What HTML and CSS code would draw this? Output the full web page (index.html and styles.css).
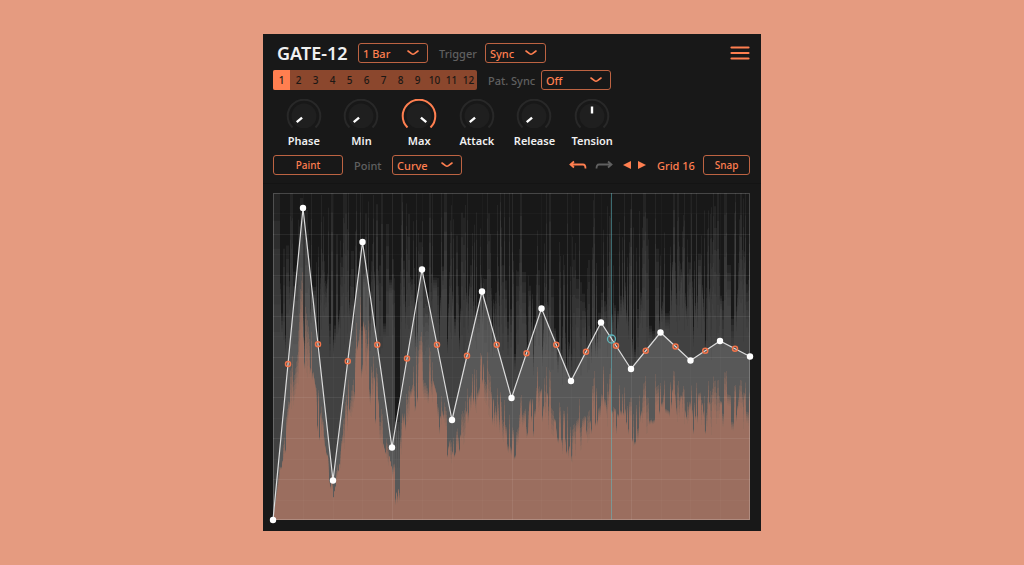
FILE: index.html
```html
<!DOCTYPE html>
<html lang="en">
<head>
    <meta charset="UTF-8">
    <meta name="viewport" content="width=device-width, initial-scale=1.0">
    <title>GATE-12</title>
    <link rel="stylesheet" href="styles.css">
</head>
<body>
    <main class="plugin">
        <div class="row">
            <h1>GATE-12</h1>
            <div class="select">
                <select class="wide" aria-label="Rate"><option>1 Bar</option><option>1/2</option><option>1/4</option></select>
                <svg viewBox="0 0 12 6"><path d="M1 1 4.5 3.7Q6 4.7 7.5 3.7L11 1"/></svg>
            </div>
            <label class="dim trigger" for="trigger">Trigger</label>
            <div class="select">
                <select id="trigger"><option>Sync</option><option>MIDI</option><option>Audio</option></select>
                <svg viewBox="0 0 12 6"><path d="M1 1 4.5 3.7Q6 4.7 7.5 3.7L11 1"/></svg>
            </div>
            <button class="menu-btn" aria-label="Menu">
                <svg viewBox="0 0 20 16"><path d="M1.5 2.5H18.5M1.5 8H18.5M1.5 13.5H18.5"/></svg>
            </button>
        </div>

        <div class="row">
            <div class="patterns" id="patterns"></div>
            <label class="dim pat-sync" for="patSync">Pat. Sync</label>
            <div class="select">
                <select id="patSync" class="wide"><option>Off</option><option>1 Beat</option><option>1 Bar</option></select>
                <svg viewBox="0 0 12 6"><path d="M1 1 4.5 3.7Q6 4.7 7.5 3.7L11 1"/></svg>
            </div>
        </div>

        <div class="knobs" id="knobs"></div>

        <div class="row tools">
            <button class="btn paint">Paint</button>
            <label class="dim point" for="point">Point</label>
            <div class="select">
                <select id="point" class="wide"><option>Curve</option><option>Hold</option><option>Pulse</option></select>
                <svg viewBox="0 0 12 6"><path d="M1 1 4.5 3.7Q6 4.7 7.5 3.7L11 1"/></svg>
            </div>
            <button class="icon-btn undo" aria-label="Undo">
                <svg viewBox="0 0 18 10"><path d="M5 1.5 1.5 4.5 5 7.5M1.5 4.5H14Q16.5 4.5 16.5 8.5"/></svg>
            </button>
            <button class="icon-btn redo" aria-label="Redo">
                <svg viewBox="0 0 18 10"><path d="M13 1.5 16.5 4.5 13 7.5M16.5 4.5H4Q1.5 4.5 1.5 8.5"/></svg>
            </button>
            <div class="arrows">
                <button class="icon-btn" aria-label="Rotate left"><svg viewBox="0 0 8 8"><path d="M8 0V8L0 4Z"/></svg></button>
                <button class="icon-btn" aria-label="Rotate right"><svg viewBox="0 0 8 8"><path d="M0 0V8L8 4Z"/></svg></button>
            </div>
            <span class="grid-label">Grid 16</span>
            <button class="btn snap">Snap</button>
        </div>

        <div class="view">
            <svg id="graph" viewBox="0 0 477 327" role="img" aria-label="Gate envelope"></svg>
        </div>
    </main>
    <script src="script.js"></script>
</body>
</html>
```

FILE: styles.css
```css
*{
    box-sizing: border-box;
}
body{
    margin: 0;
    min-height: 100vh;
    display: flex;
    justify-content: center;
    align-items: center;
    background-color: #e59b80;
    font-family: "Noto Sans", "Open Sans", sans-serif;
    font-size: 11px;
    font-weight: 500;
    color: #f0f0f0;
}
button, select{
    font: inherit;
    color: #ff7f50;
    background: none;
    border: none;
    padding: 0;
    margin: 0;
}
svg{
    display: block;
    fill: none;
    stroke: currentColor;
}
.plugin{
    width: 100%;
    max-width: 498px;
    padding: 9px 11px 11px 10px;
    background-color: #181818;
}
.row{
    display: flex;
    align-items: center;
    height: 20px;
    margin-bottom: 7px;
}
h1{
    margin: 0 12px 0 4px;
    font-size: 18px;
    font-weight: 600;
    line-height: 20px;
    width: 69px;
    white-space: nowrap;
}
.dim{
    color: #606060;
    white-space: nowrap;
}
.trigger{
    width: 46px;
    margin-left: 11px;
}
.pat-sync{
    width: 53px;
    margin-left: 11px;
}
.point{
    width: 38px;
    margin-left: 11px;
}

/* drop-downs */
.select{
    display: grid;
    align-items: center;
    color: #ff7f50;
}
.select select, .select svg{
    grid-area: 1 / 1;
}
.select select{
    appearance: none;
    width: 61px;
    height: 20px;
    padding: 0 4px;
    border: 1px solid #bd6342;
    border-radius: 3px;
}
.select .wide{
    width: 70px;
}
.select svg{
    justify-self: end;
    width: 12px;
    height: 6px;
    margin-right: 9px;
    stroke-width: 1.6;
    stroke-linecap: round;
    pointer-events: none;
}
.menu-btn{
    margin-left: auto;
}
.menu-btn svg{
    width: 20px;
    height: 16px;
    stroke-width: 2.2;
    stroke-linecap: round;
}

/* pattern selector */
.patterns{
    display: flex;
    border-radius: 2px;
    overflow: hidden;
    background-color: #8b472d;
}
.patterns button{
    width: 17px;
    height: 20px;
    color: #1c1815;
    font-size: 10px;
    text-align: center;
}
.patterns .active{
    background-color: #ff7f50;
}

/* knobs */
.knobs{
    display: grid;
    grid-template-columns: repeat(6, 1fr);
    max-width: 346px;
    margin: 9px 0 6px 2px;
}
.knob{
    display: grid;
    justify-items: center;
    row-gap: 5px;
    line-height: 16px;
    font-weight: 600;
    color: #f0f0f0;
}
.knob svg, .knob input{
    grid-area: 1 / 1;
    width: 36px;
    height: 29px;
    margin: 0;
}
.knob input{
    opacity: 0;
}
.knob .disc{
    fill: #1f1f1f;
    stroke: none;
}
.knob .track{
    stroke: #282828;
    stroke-width: 2;
}
.knob .full{
    stroke: #ff7f50;
}
.knob .hand{
    stroke: #ffffff;
    stroke-width: 2.4;
}

/* toolbar */
.tools{
    margin-bottom: 0;
}
.btn{
    height: 20px;
    border: 1px solid #bd6342;
    border-radius: 3px;
    font-size: 10px;
}
.paint{
    width: 70px;
}
.snap{
    width: 47px;
}
.icon-btn svg{
    height: 10px;
    stroke-width: 1.8;
}
.undo{
    margin-left: auto;
}
.undo svg, .redo svg{
    width: 18px;
}
.redo{
    margin-left: 8px;
    color: #606060;
}
.arrows{
    display: flex;
    gap: 7px;
    margin: 0 11px 0 10px;
}
.arrows svg{
    width: 8px;
    height: 8px;
    fill: currentColor;
    stroke: none;
}
.grid-label{
    width: 37px;
    margin-right: 9px;
    color: #ff7f50;
    white-space: nowrap;
}

/* envelope view */
.view{
    margin: 8px -11px 0 -10px;
    padding: 9px 11px 0 10px;
    border-top: 1px solid #141414;
}
#graph{
    width: 100%;
    overflow: visible;
}
.wave, .wet, .area{
    stroke: none;
}
.wave{
    fill: #424242;
}
.wet{
    fill: #9c6f60;
}
.area{
    fill: rgba(255, 255, 255, 0.12);
}
.grid{
    stroke: rgba(255, 255, 255, 0.025);
}
.grid.major{
    stroke: rgba(255, 255, 255, 0.07);
}
.frame{
    stroke: rgba(255, 255, 255, 0.2);
}
.curve{
    stroke: #dcdcdc;
    stroke-width: 1.2;
}
.node{
    fill: #ffffff;
    stroke: none;
}
.mid{
    stroke: #f0734a;
    stroke-width: 1.5;
}
.playhead{
    stroke: rgba(95, 190, 200, 0.5);
    stroke-width: 1;
}
.playhead-dot{
    stroke: #5fb5bb;
    stroke-width: 1.3;
}
```

FILE: script.js
```javascript
const graph = document.getElementById('graph');
const patterns = document.getElementById('patterns');
const knobs = document.getElementById('knobs');

const W = 477;
const H = 327;

for(let i = 1; i <= 12; i++){
    const btn = document.createElement('button');
    btn.textContent = i;
    if(i === 1){
        btn.classList.add('active');
    }
    patterns.appendChild(btn);
}

const params = [
    ['Phase', 0], ['Min', 0], ['Max', 100],
    ['Attack', 0], ['Release', 0], ['Tension', 50]
];
params.forEach(function([name, value]){
    // the hand sweeps 260 degrees, straight up at 50
    const angle = (value - 50) * 2.6;
    const knob = document.createElement('label');
    knob.className = 'knob';
    knob.innerHTML = `
        <svg viewBox="0 0 36 29">
            <circle class="disc" cx="18" cy="17" r="12.5"/>
            <path class="track ${value === 100 ? 'full' : ''}" d="M6.5 28.5A16.3 16.3 0 1 1 29.5 28.5"/>
            <path class="hand" d="M18 7.5V14.5" transform="rotate(${angle} 18 17)"/>
        </svg>
        <input type="range" min="0" max="100" value="${value}">
        <span>${name}</span>`;
    knobs.appendChild(knob);
});

const points = [
    [0, 327], [30, 15], [60, 287.5], [89.5, 49], [119, 254.5], [149, 76.5],
    [179, 227], [209, 98.5], [238.5, 205], [268.5, 115.5], [298, 188],
    [328, 129.5], [358, 176], [387.5, 139.5], [417.5, 167.5], [447, 148], [477, 163.5]
];

function curveY(x){
    for(let i = 1; i < points.length; i++){
        const [x0, y0] = points[i - 1];
        const [x1, y1] = points[i];
        if(x <= x1){
            return y0 + (y1 - y0) * (x - x0) / (x1 - x0);
        }
    }
    return points[points.length - 1][1];
}

let seed = 41;
function random(){
    seed = (seed * 16807) % 2147483647;
    return seed / 2147483647;
}

// loudness of the track, as [x, level] stops
const swells = [
    [0, 0.62], [30, 0.6], [60, 0.63], [100, 0.64], [130, 0.6], [165, 0.62],
    [205, 0.64], [240, 0.56], [270, 0.56], [300, 0.53], [330, 0.62],
    [360, 0.6], [400, 0.7], [440, 0.6], [477, 0.66]
];
function swell(x){
    for(let i = 1; i < swells.length; i++){
        const [x0, v0] = swells[i - 1];
        const [x1, v1] = swells[i];
        if(x <= x1){
            return v0 + (v1 - v0) * (x - x0) / (x1 - x0);
        }
    }
}

// per pixel column: a solid body and a peak that fades out above it
const columns = [];
let body = 0.6;
let peak = 0.9;
for(let x = 0; x < W; x++){
    if(random() < 0.7){
        body = swell(x) + (random() - 0.6) * 0.22;
        peak = body + 0.04 + Math.pow(random(), 2) * 0.46;
    }
    columns.push([body, Math.min(peak, 1)]);
}
// short silence before the third peak
for(let x = 122; x < 127; x++){
    columns[x] = [0.16 + (x % 2) * 0.1, 0.3];
}
// transients that reach full scale
[129, 227, 462].forEach(x => columns[x] = [0.86, 1]);

function wavePath(mix, gated){
    let d = `M0 ${H}`;
    columns.forEach(function([low, high], x){
        let level = low + (high - low) * mix;
        if(gated){
            level = Math.min(low, 0.72) + (level - low) * 0.5;
            level *= 1 - curveY(x + 0.5) / H;
        }
        d += `V${(H - level * H).toFixed(1)}H${x + 1}`;
    });
    return d + `V${H}Z`;
}

function gridLines(){
    let out = '';
    for(let i = 1; i < 16; i++){
        const x = Math.round(W * i / 16) + 0.5;
        const y = Math.round(H * i / 16) + 0.5;
        out += `<path class="${i % 4 ? 'grid' : 'grid major'}" d="M${x} 0V${H}"/>`;
        out += `<path class="${i % 2 ? 'grid' : 'grid major'}" d="M0 ${y}H${W}"/>`;
    }
    return out;
}

const layers = [[0, 1], [0.2, 0.5], [0.4, 0.4], [0.6, 0.35], [0.8, 0.3], [1, 0.3]];
const line = points.map(p => p.join(' ')).join('L');
let svg = '';

layers.forEach(function([mix, opacity]){
    svg += `<path class="wave" opacity="${opacity}" d="${wavePath(mix, false)}"/>`;
});
svg += `<path class="area" d="M${line}V${H}Z"/>`;
layers.forEach(function([mix, opacity]){
    svg += `<path class="wet" opacity="${opacity}" d="${wavePath(mix, true)}"/>`;
});
svg += gridLines();
svg += `<rect class="frame" x="0.5" y="0.5" width="${W - 1}" height="${H - 1}"/>`;
svg += `<path class="playhead" d="M338.5 0V${H}"/>`;
svg += `<path class="curve" d="M${line}"/>`;
for(let i = 1; i < points.length; i++){
    const x = (points[i - 1][0] + points[i][0]) / 2;
    const y = (points[i - 1][1] + points[i][1]) / 2;
    svg += `<circle class="mid" cx="${x}" cy="${y}" r="2.5"/>`;
}
points.forEach(function([x, y]){
    svg += `<circle class="node" cx="${x}" cy="${y}" r="3.2"/>`;
});
svg += '<circle class="playhead-dot" cx="338.5" cy="146" r="4"/>';

graph.innerHTML = svg;
```
